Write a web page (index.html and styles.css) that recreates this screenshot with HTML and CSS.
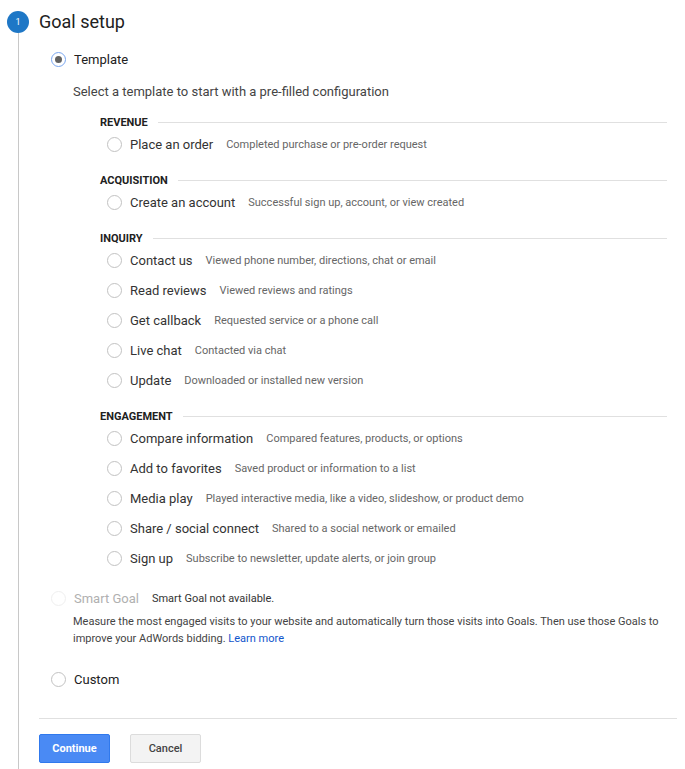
FILE: index.html
```html
<!DOCTYPE html>
<html lang="en">
<head>
  <meta charset="UTF-8" />
  <meta name="viewport" content="width=device-width, initial-scale=1.0"/>
  <title>Goal setup</title>
  <link rel="stylesheet" href="styles.css">
</head>
<body>
  <div class="step-head">
    <span class="step-num">1</span>
    <h1>Goal setup</h1>
  </div>

  <div class="step-body">
    <label class="option">
      <span class="radio checked"></span>
      <span class="opt-name">Template</span>
    </label>
    <p class="hint">Select a template to start with a pre-filled configuration</p>

    <div class="templates">
      <div class="group">
        <div class="group-title">Revenue</div>
        <label class="item"><span class="radio"></span><span class="item-name">Place an order</span><span class="item-desc">Completed purchase or pre-order request</span></label>
      </div>

      <div class="group">
        <div class="group-title">Acquisition</div>
        <label class="item"><span class="radio"></span><span class="item-name">Create an account</span><span class="item-desc">Successful sign up, account, or view created</span></label>
      </div>

      <div class="group">
        <div class="group-title">Inquiry</div>
        <label class="item"><span class="radio"></span><span class="item-name">Contact us</span><span class="item-desc">Viewed phone number, directions, chat or email</span></label>
        <label class="item"><span class="radio"></span><span class="item-name">Read reviews</span><span class="item-desc">Viewed reviews and ratings</span></label>
        <label class="item"><span class="radio"></span><span class="item-name">Get callback</span><span class="item-desc">Requested service or a phone call</span></label>
        <label class="item"><span class="radio"></span><span class="item-name">Live chat</span><span class="item-desc">Contacted via chat</span></label>
        <label class="item"><span class="radio"></span><span class="item-name">Update</span><span class="item-desc">Downloaded or installed new version</span></label>
      </div>

      <div class="group">
        <div class="group-title">Engagement</div>
        <label class="item"><span class="radio"></span><span class="item-name">Compare information</span><span class="item-desc">Compared features, products, or options</span></label>
        <label class="item"><span class="radio"></span><span class="item-name">Add to favorites</span><span class="item-desc">Saved product or information to a list</span></label>
        <label class="item"><span class="radio"></span><span class="item-name">Media play</span><span class="item-desc">Played interactive media, like a video, slideshow, or product demo</span></label>
        <label class="item"><span class="radio"></span><span class="item-name">Share / social connect</span><span class="item-desc">Shared to a social network or emailed</span></label>
        <label class="item"><span class="radio"></span><span class="item-name">Sign up</span><span class="item-desc">Subscribe to newsletter, update alerts, or join group</span></label>
      </div>
    </div>

    <label class="option smart">
      <span class="radio disabled"></span>
      <span class="opt-name">Smart Goal</span>
      <span class="opt-note">Smart Goal not available.</span>
    </label>
    <p class="smart-desc">Measure the most engaged visits to your website and automatically turn those visits into Goals. Then use those Goals to improve your AdWords bidding. <a href="#">Learn more</a></p>

    <label class="option custom">
      <span class="radio"></span>
      <span class="opt-name">Custom</span>
    </label>

    <div class="actions">
      <button class="btn btn-primary">Continue</button>
      <button class="btn">Cancel</button>
    </div>
  </div>
</body>
</html>
```

FILE: styles.css
```css
body {
  font-family: Roboto, "Noto Sans", sans-serif;
  background: #fff;
  color: #212121;
  margin: 0;
  padding: 0;
}

.step-head {
  display: flex;
  align-items: center;
  padding: 11px 0 0 7px;
  height: 22px;
}

.step-num {
  width: 22px;
  height: 22px;
  border-radius: 50%;
  background: #1e77c6;
  color: #fff;
  font-size: 9px;
  line-height: 22px;
  text-align: center;
}

h1 {
  margin: 0 0 0 10px;
  font-size: 18px;
  font-weight: 400;
  line-height: 22px;
}

.step-body {
  margin-left: 18px;
  border-left: 1px solid #c8c8c8;
  padding: 11px 8px 6px 20px;
}

.radio {
  display: inline-block;
  box-sizing: border-box;
  width: 15px;
  height: 15px;
  border: 1px solid #c2c2c2;
  border-radius: 50%;
  flex-shrink: 0;
}

.radio.checked {
  border-color: #79a6f0;
  position: relative;
}

.radio.checked::after {
  content: "";
  position: absolute;
  left: 3px;
  top: 3px;
  width: 7px;
  height: 7px;
  border-radius: 50%;
  background: #616161;
}

.radio.disabled {
  border-color: #efefef;
}

.option {
  display: flex;
  align-items: center;
  height: 30px;
  padding-left: 12px;
  font-size: 13px;
}

.opt-name {
  margin-left: 8px;
}

.hint {
  margin: 8px 0 0 34px;
  font-size: 13px;
  line-height: 20px;
  color: #444;
}

.templates {
  margin: -1px 10px 0 61px;
}

.group {
  margin-top: 14px;
}

.group-title {
  display: flex;
  align-items: center;
  height: 14px;
  font-size: 11px;
  font-weight: 700;
  text-transform: uppercase;
  color: #212121;
}

.group-title::after {
  content: "";
  flex: 1;
  height: 1px;
  margin-left: 10px;
  background: #e0e0e0;
}

.item {
  display: flex;
  align-items: center;
  height: 30px;
  padding-left: 7px;
}

.item-name {
  margin-left: 8px;
  font-size: 13px;
  color: #333;
}

.item-desc {
  margin-left: 13px;
  font-size: 11px;
  color: #666;
}

.smart {
  margin-top: 10px;
}

.smart .opt-name {
  color: #b0b0b0;
}

.opt-note {
  margin-left: 13px;
  font-size: 11px;
  color: #333;
}

.smart-desc {
  margin: 0 0 0 34px;
  font-size: 11px;
  line-height: 17px;
  color: #444;
}

.smart-desc a {
  color: #1155cc;
  text-decoration: none;
}

.custom {
  margin-top: 17px;
}

.actions {
  margin-top: 24px;
  padding-top: 15px;
  border-top: 1px solid #e0e0e0;
  display: flex;
  gap: 20px;
}

.btn {
  width: 71px;
  height: 29px;
  font-family: inherit;
  font-size: 11px;
  font-weight: 500;
  color: #444;
  background: #f3f3f3;
  border: 1px solid #dcdcdc;
  border-radius: 2px;
  cursor: pointer;
}

.btn-primary {
  font-weight: 700;
  color: #fff;
  background: #4a8af4;
  border-color: #3079ed;
}
```
